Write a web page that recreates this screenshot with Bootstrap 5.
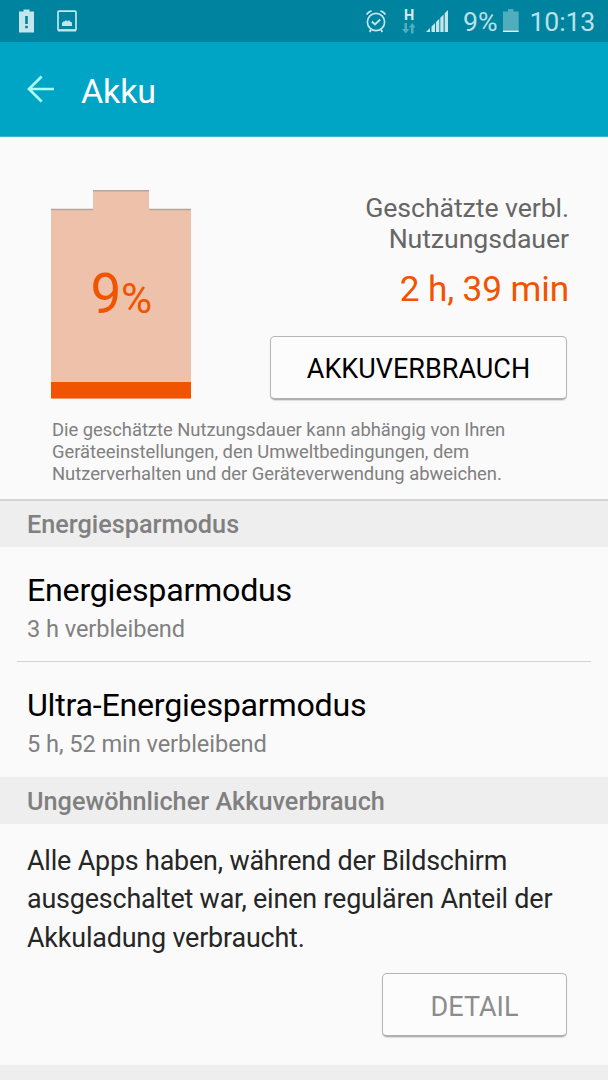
<!DOCTYPE html>
<html lang="de">
<head>
<meta charset="utf-8">
<meta name="viewport" content="width=device-width, initial-scale=1">
<title>Akku</title>
<link href="https://cdn.jsdelivr.net/npm/bootstrap@5.3.0/dist/css/bootstrap.min.css" rel="stylesheet">
<style>
body { font-family: Roboto, "Noto Sans", sans-serif; font-weight: 400; background: #fafafa; color: #000; height: 1080px; overflow: hidden; }
svg { display: block; flex: none; }
.statusbar { height: 42px; background: #00839e; color: #b9e1e8; font-size: 26.7px; line-height: 43px; padding: 1px 0 0 18px; }
.statusbar span { white-space: nowrap; }
.icon-picture { margin-left: 22px; }
.icon-alarm { margin-left: 288px; }
.net { width: 14px; margin-left: 15px; text-align: center; font: 700 14.5px/15px Roboto, sans-serif; padding-top: 7px; color: #d3edf1; }
.icon-signal { margin-left: 10px; }
.percent { margin-left: 14px; }
.icon-battery { margin-left: 5px; }
.clock { margin-left: 10px; letter-spacing: -.2px; }
.titlebar { height: 95px; background: #00a5c6; border-bottom: 1px solid #3fb3cb; padding-left: 26px; }
.titlebar h1 { font-size: 34px; line-height: 40px; font-weight: 400; color: #fff; margin: 3px 0 0 26px; letter-spacing: -.1px; }
.summary { height: 362px; padding: 53px 41px 0 51px; }
.charge { color: #f05400; width: 140px; height: 209px; }
.charge-value { inset: 0; padding-top: 72px; text-align: center; line-height: 64px; font-size: 55px; letter-spacing: -.5px; }
.charge-value small { font-size: 42.5px; }
.estimate { padding-top: 3px; text-align: right; }
.estimate-label { font-size: 26.7px; line-height: 31px; letter-spacing: -.08px; color: #666; margin-right: -2px; }
.estimate-time { font-size: 35.2px; line-height: 42px; letter-spacing: -.12px; color: #f05400; margin: 13px -2px 26px 0; }
.btn-outline { width: 297px; height: 64px; border: 1.5px solid #b5b5b5; border-bottom: 2px solid #b0b0b0; border-radius: 5px; background: #fcfcfc; font-size: 27px; line-height: 30px; color: #000; box-shadow: 0 1px 1px #ddd; padding: 3px 0 0; }
.note { font-size: 18.4px; line-height: 22px; letter-spacing: -.03px; color: #808080; margin: 19px 0 0 1px; white-space: nowrap; }
.section-title { height: 46px; background: #eee; color: #808080; font-size: 25.25px; line-height: 48px; font-weight: 500; padding-left: 27px; margin: 0; }
.mode { height: 115px; padding: 24px 27px 0; }
.mode-name { font-size: 32.2px; line-height: 38px; margin-bottom: 6px; letter-spacing: -.25px; }
.mode-time { font-size: 23.6px; line-height: 28px; letter-spacing: -.07px; color: #808080; }
.rule { height: 1px; margin: -1px 17px 0; background: #d4d4d4; }
.report { height: 241px; padding: 18px 41px 0 27px; }
.report p { font-size: 26.9px; line-height: 38.4px; letter-spacing: -.18px; color: #262626; margin-bottom: 16px; white-space: nowrap; }
.btn-detail { width: 185px; color: #8c8c8c; padding-top: 4px; }
</style>
<script src="https://cdn.jsdelivr.net/npm/bootstrap@5.3.0/dist/js/bootstrap.bundle.min.js"></script>
</head>
<body>
<header>
  <div class="statusbar d-flex">
    <svg width="17" height="41" viewBox="0 0 17 41" fill="#c3e6ec"><path fill-rule="evenodd" d="M1 10.500h4.500V8.500h6v2H16v21H1zM7.200 15h2.600v8H7.200zM7.200 24.800h2.600v2.400H7.200z"/></svg>
    <svg class="icon-picture" width="20" height="41" viewBox="0 0 20 41"><rect x="1" y="10.200" width="18" height="19" rx="1" fill="none" stroke="#c3e6ec" stroke-width="1.700"/><path d="M1 28.500h18v2H1z" fill="#c3e6ec"/><path d="M5 25v-3l1.500-1.500h1l1.500-1.500 1.500 1.500 1.500-1.500 1.500 2h1L15 22.500V25z" fill="#c3e6ec"/></svg>
    <svg class="icon-alarm" width="22" height="41" viewBox="0 0 22 41" fill="none" stroke="#c3e6ec" stroke-width="1.700"><circle cx="11" cy="21" r="8.600"/><path d="M6.800 20.500l3.200 3 5.200-5" stroke-width="1.900"/><path d="M1.500 13.500q2-3 5-3.700M20.500 13.500q-2-3-5-3.700M6 28.500l-1.300 2.500M16 28.500l1.300 2.500" stroke-width="1.800"/></svg>
    <div class="net">H
      <svg width="14" height="11" viewBox="0 0 14 11" fill="#4fb0c1"><path d="M2.500 0h2.500v6h2.500L3.700 10.500 0 6h2.500zM9 10.500V4.500H6.800L10.300 0 13.500 4.500h-2v6z"/></svg></div>
    <svg class="icon-signal" width="23" height="41" viewBox="0 0 23 41" fill="#c3e6ec"><path d="M0 31l4-4v4zM5.500 25.500l3.500-3.500V31H5.500zM10 21l3.300-3.300V31H10zM14.300 16.700l3.300-3.300V31h-3.300zM18.700 12.300l3.300-3.300V31h-3.300z"/></svg>
    <span class="percent">9%</span>
    <svg class="icon-battery" width="17" height="41" viewBox="0 0 17 41"><path d="M0 10.500h5V8h5.500v2.500h5.200V29.500H0z" fill="#4fadbd"/><path d="M0 29.500h15.700V31H0z" fill="#dff4f7"/></svg>
    <span class="clock">10:13</span>
  </div>
  <nav class="titlebar d-flex align-items-center">
    <svg width="29" height="28" viewBox="0 0 29 28" fill="none" stroke="#a9fff5" stroke-width="2.700"><path d="M28 14H3M15.600 1.500L3 14l12.600 12.500"/></svg>
    <h1>Akku</h1>
  </nav>
</header>
<main>
  <section class="summary">
    <div class="d-flex justify-content-between">
      <div class="charge position-relative">
        <svg width="140" height="209" viewBox="0 0 140 209"><path d="M0 19h42V0h56v19h42v189.500H0z" fill="#eec2aa"/><path d="M0 19.500h42M42 .8h56M98 19.500h42" stroke="#b5a59b" stroke-width="1.500"/><path d="M0 192h140v16.500H0z" fill="#f05400"/></svg>
        <div class="charge-value position-absolute">9<small>%</small></div>
      </div>
      <div class="estimate d-flex flex-column align-items-end">
        <div class="estimate-label">Geschätzte verbl.<br>Nutzungsdauer</div>
        <div class="estimate-time">2 h, 39 min</div>
        <button class="btn btn-outline">AKKUVERBRAUCH</button>
      </div>
    </div>
    <p class="note">Die geschätzte Nutzungsdauer kann abhängig von Ihren<br>Geräteeinstellungen, den Umweltbedingungen, dem<br>Nutzerverhalten und der Geräteverwendung abweichen.</p>
  </section>
  <div class="rule mx-0 mt-0" style="height:2px"></div>
  <h2 class="section-title">Energiesparmodus</h2>
  <div class="mode"><div class="mode-name">Energiesparmodus</div><div class="mode-time">3 h verbleibend</div></div>
  <div class="rule"></div>
  <div class="mode"><div class="mode-name">Ultra-Energiesparmodus</div><div class="mode-time">5 h, 52 min verbleibend</div></div>
  <h2 class="section-title" style="height:47px;line-height:50px">Ungewöhnlicher Akkuverbrauch</h2>
  <section class="report d-flex flex-column">
    <p>Alle Apps haben, während der Bildschirm<br>ausgeschaltet war, einen regulären Anteil der<br>Akkuladung verbraucht.</p>
    <button class="btn btn-outline btn-detail align-self-end">DETAIL</button>
  </section>
  <div class="section-title"></div>
</main>
</body>
</html>
